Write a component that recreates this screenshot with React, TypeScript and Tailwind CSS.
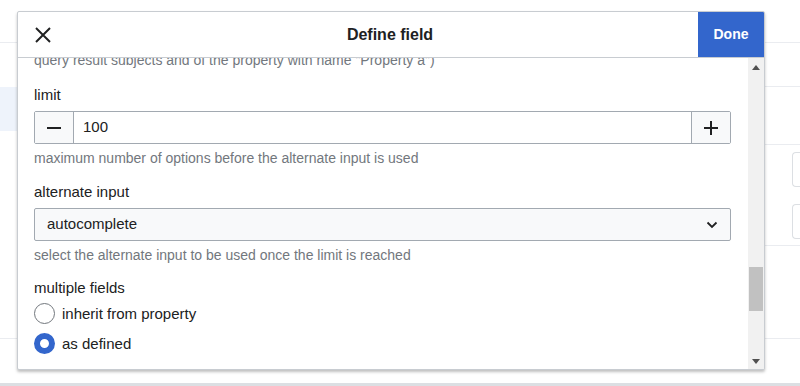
import { useState } from 'react';

// Background page rows that peek out around the dialog
function PageBackdrop() {
  return (
    <div className="flex flex-col w-[800px] h-[386px]">
      <div className="h-[43px] border-b border-[#eaecf0] shrink-0" />
      <div className="h-[44px] flex shrink-0">
        <div className="w-[17px] shrink-0" />
        <div className="flex-1 border-b border-[#eaecf0]" />
      </div>
      <div className="flex h-[251px] shrink-0">
        <div className="w-[17px] shrink-0 flex flex-col">
          <div className="h-[44px] bg-[#eef3fb]" />
        </div>
        <div className="flex-1 min-w-0 flex flex-col">
          <div className="h-[58px] border-b border-[#eaecf0] shrink-0" />
          <div className="flex flex-col items-end gap-[17px] pt-[7px]">
            <div className="h-[35px] w-[8px] border-l border-y border-[#dcdfe3] rounded-l-sm" />
            <div className="h-[35px] w-[8px] border-l border-y border-[#dcdfe3] rounded-l-sm" />
          </div>
          <div className="mt-[6px] border-b border-[#eaecf0]" />
        </div>
      </div>
      <div className="h-[45px] border-t border-[#eaecf0] shrink-0" />
      <div className="h-[3px] bg-[#dcdfe3] shrink-0" />
    </div>
  );
}

function Radio({ checked, label }: { checked: boolean; label: string }) {
  return (
    <div className="flex items-center gap-[7px] h-[21px]">
      {checked ? (
        <span className="w-[21px] h-[21px] rounded-full border-[6px] border-[#36c] bg-white shrink-0" />
      ) : (
        <span className="w-[21px] h-[21px] rounded-full border border-[#72777d] bg-white shrink-0" />
      )}
      <span className="text-[15px] leading-[20px] text-[#202122]">{label}</span>
    </div>
  );
}

export default function App() {
  const [limit] = useState(100);

  return (
    <div
      className="relative w-[800px] h-[386px] bg-white overflow-hidden"
      style={{ fontFamily: '"Liberation Sans", Arial, sans-serif' }}
    >
      <PageBackdrop />

      {/* Dialog */}
      <div className="absolute left-[17px] top-[11px] w-[748px] h-[359px] bg-white border border-[#c8ccd1] rounded-[2px] shadow-[0_2px_3px_rgba(0,0,0,0.25)] flex flex-col overflow-hidden">
        {/* Header */}
        <div className="h-[46px] flex items-stretch border-b border-[#c8ccd1] shrink-0">
          <button className="w-[50px] flex items-center justify-center">
            <svg width="18" height="18" viewBox="0 0 20 20">
              <path d="M3 3 L17 17 M17 3 L3 17" stroke="#202122" strokeWidth="2.2" strokeLinecap="square" />
            </svg>
          </button>
          <div className="flex-1 flex items-center justify-center pl-[14px] text-[16px] font-bold text-[#202122]">
            Define field
          </div>
          <button className="w-[66px] bg-[#36c] text-white text-[14px] font-bold flex items-center justify-center">
            Done
          </button>
        </div>

        {/* Body */}
        <div className="flex flex-1 min-h-0">
          <div className="flex-1 overflow-hidden pl-[16px] pr-[17px]">
            <div className="mt-[-8px] flex flex-col">
              <p className="text-[14px] leading-[20px] text-[#72777d]">
                query result subjects and of the property with name "Property a")
              </p>

              <label className="mt-[15px] text-[15px] leading-[20px] text-[#202122]">limit</label>
              <div className="mt-[6px] h-[33px] flex border border-[#a2a9b1] rounded-[2px]">
                <button className="w-[39px] bg-[#f8f9fa] border-r border-[#a2a9b1] flex items-center justify-center">
                  <span className="w-[14px] h-[2px] bg-[#202122]" />
                </button>
                <div className="flex-1 flex items-center pl-[9px] text-[15px] text-[#202122]">{limit}</div>
                <button className="w-[39px] bg-[#f8f9fa] border-l border-[#a2a9b1] flex items-center justify-center relative">
                  <span className="w-[14px] h-[2px] bg-[#202122]" />
                  <span className="absolute w-[2px] h-[14px] bg-[#202122]" />
                </button>
              </div>
              <p className="mt-[4px] text-[14px] leading-[20px] text-[#72777d]">
                maximum number of options before the alternate input is used
              </p>

              <label className="mt-[14px] text-[15px] leading-[20px] text-[#202122]">alternate input</label>
              <div className="mt-[6px] h-[33px] flex items-center justify-between bg-[#f8f9fa] border border-[#a2a9b1] rounded-[2px] pl-[12px] pr-[12px]">
                <span className="text-[15px] text-[#202122]">autocomplete</span>
                <svg width="12" height="8" viewBox="0 0 12 8">
                  <path d="M1.5 1.5 L6 6 L10.5 1.5" fill="none" stroke="#202122" strokeWidth="1.8" />
                </svg>
              </div>
              <p className="mt-[4px] text-[14px] leading-[20px] text-[#72777d]">
                select the alternate input to be used once the limit is reached
              </p>

              <label className="mt-[13px] text-[15px] leading-[20px] text-[#202122]">multiple fields</label>
              <div className="mt-[5px] flex flex-col gap-[9px]">
                <Radio checked={false} label="inherit from property" />
                <Radio checked={true} label="as defined" />
              </div>
            </div>
          </div>

          {/* Scrollbar */}
          <div className="w-[16px] bg-[#f1f1f1] flex flex-col items-center shrink-0">
            <div className="h-[16px] flex items-center justify-center mt-[1px]">
              <svg width="8" height="5" viewBox="0 0 8 5"><path d="M0 5 L4 0 L8 5 Z" fill="#505050" /></svg>
            </div>
            <div className="flex-1 w-full px-[1px] flex flex-col">
              <div className="mt-[192px] h-[44px] w-full bg-[#c1c1c1]" />
            </div>
            <div className="h-[16px] flex items-center justify-center">
              <svg width="8" height="5" viewBox="0 0 8 5"><path d="M0 0 L8 0 L4 5 Z" fill="#505050" /></svg>
            </div>
          </div>
        </div>
      </div>
    </div>
  );
}
